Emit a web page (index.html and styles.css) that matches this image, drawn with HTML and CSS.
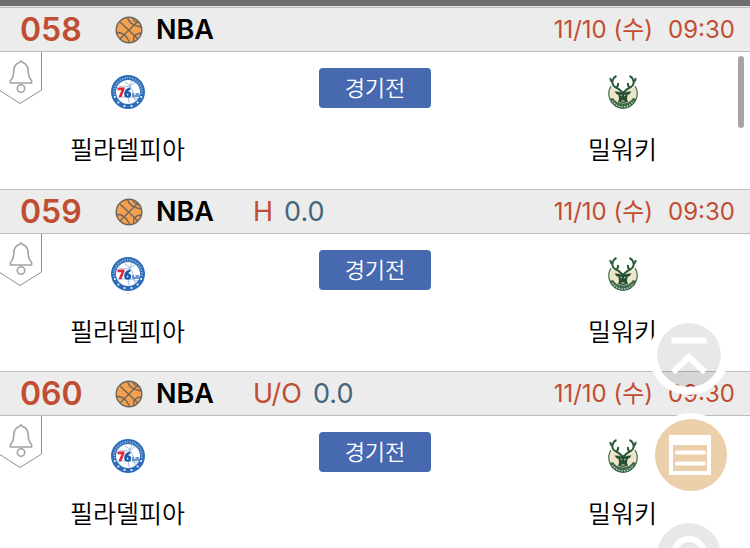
FILE: index.html
```
<!DOCTYPE html>
<html lang="ko">
<head>
  <meta charset="UTF-8">
  <meta name="viewport" content="width=device-width, initial-scale=1.0">
  <title>NBA 경기 목록</title>
  <link rel="stylesheet" href="styles.css">
</head>
<body>
  <!-- Shared icons -->
  <svg class="sprite" aria-hidden="true">
    <symbol id="ball" viewBox="0 0 28 28">
      <circle cx="14" cy="14" r="12.8" fill="#f5a04f" stroke="#6a6560" stroke-width="1.4"/>
      <path d="M5 6 L23 23 M23 5 L5 23 M12.500 1.500 Q14 9 26 11 M18 2.500 Q20 6.500 24.500 7 M2 16.500 Q10 16 14.500 26 M19 26 Q17 18 26 17" fill="none" stroke="#6a6560" stroke-width="1.3"/>
    </symbol>
    <symbol id="bell" viewBox="0 0 42 52">
      <path d="M41.5 0 V38 L20 51.5 L-1 38" fill="#fff" stroke="#8f8f8f" stroke-width="1"/>
      <g fill="none" stroke="#a3a3a3" stroke-width="1.6" stroke-linejoin="round">
        <path d="M19.4 10.6 Q21 7.6 22.6 10.6 Q28 12.5 28.2 19 C28.3 24 29 26 31.6 28.5 V31 H10.4 V28.5 C13 26 13.7 24 13.8 19 Q14 12.5 19.4 10.6 Z"/>
        <circle cx="21" cy="36.5" r="3.7"/>
      </g>
    </symbol>
    <symbol id="sixers" viewBox="0 0 36 36">
      <circle cx="18" cy="18" r="17" fill="#2e6db8"/>
      <path d="M4.500 20.500 A13.800 13.800 0 1 1 31.500 20.500" fill="none" stroke="#c9dcf1" stroke-width="2" stroke-dasharray="1.3 1.3" opacity=".6"/>
      <circle cx="18" cy="18" r="12" fill="#fff"/>
      <path d="M9 12 Q18 15 25 8.500 M15 8 Q23 11 25 27 M22 7 Q17 14 19 29 M8 24 Q17 21 28 25" fill="none" stroke="#9dbde0" stroke-width="1"/>
      <path d="M7.500 13.500 H14.500 V15.500 L11.500 23 H8.500 L11.500 16.300 H7.500 Z" fill="#e2253d"/>
      <path d="M20.500 13.500 Q15 14 14.200 19 Q13.800 23.700 17.500 23.700 Q21.200 23.700 21.200 20.200 Q21 17.200 18 17.400 Q18.600 15.900 20.500 15.700 Z M17.600 19.400 Q18.800 19.400 18.500 20.700 Q18 22 17 21.300 Q16.600 20 17.600 19.400" fill="#1d5cab" fill-rule="evenodd"/>
      <path d="M22 22 H29.500 M22 20 H24 M25.500 20 H29" stroke="#3f77ba" stroke-width="1.5"/>
      <g fill="#fff">
        <circle cx="4.8" cy="23" r="1"/><circle cx="8.4" cy="28.4" r="1"/><circle cx="14.5" cy="32" r="1"/>
        <circle cx="21.5" cy="32" r="1"/><circle cx="27.6" cy="28.4" r="1"/><circle cx="31.2" cy="23" r="1"/>
      </g>
    </symbol>
    <symbol id="bucks" viewBox="0 0 36 36">
      <path d="M6 12.500 A14 14 0 1 0 30 12.500 Q24 17 18 17 Q12 17 6 12.500 Z" fill="#eee6c9"/>
      <path d="M6 12 A14.200 14.200 0 1 0 30 12" fill="none" stroke="#4d7557" stroke-width="1.3"/>
      <path d="M4.600 25 A14 14 0 0 0 31.400 25 L28 24 Q25 29 18 29.500 Q11 29 8 24 Z" fill="#3f6b4b"/>
      <path d="M7.500 27 A12.300 12.300 0 0 0 28.500 27" fill="none" stroke="#d8e0d5" stroke-width="1.3" stroke-dasharray="1.3 1.4"/>
      <path d="M17 18 Q14 14.500 10 13 Q6 10 8 5.500 Q9 3 11.500 2 M7.500 8 Q5 6.500 5.500 4 M11.500 13.500 Q13.500 12 13 9 M19 18 Q22 14.500 26 13 Q30 10 28 5.500 Q27 3 24.500 2 M28.500 8 Q31 6.500 30.500 4 M24.500 13.500 Q22.500 12 23 9" fill="none" stroke="#2c5b3c" stroke-width="2"/>
      <path d="M9.500 17.500 Q13 17 15.500 18.500 L18 17 L20.500 18.500 Q23 17 26.500 17.500 Q25 20.500 22.500 21 L22 25 L23 28 L18 29 L13 28 L14 25 L13.500 21 Q11 20.500 9.500 17.500 Z" fill="#244f34"/>
      <path d="M15.500 21 L17 22 M20.500 21 L19 22 M16.500 27 H19.500" stroke="#eee6c9" stroke-width="1"/>
    </symbol>
  </svg>

  <div class="top-bar"></div>

  <main class="game-list">
    <section class="game">
      <header class="game-header">
        <span class="game-no">058</span>
        <svg class="ball"><use href="#ball"/></svg>
        <span class="league">NBA</span>
        <time class="date">11/10 (수)</time>
        <time class="time">09:30</time>
      </header>
      <div class="game-body">
        <button class="alarm" type="button" aria-label="알림"><svg><use href="#bell"/></svg></button>
        <div class="team"><svg><use href="#sixers"/></svg><span>필라델피아</span></div>
        <div class="status"><button class="status-btn" type="button">경기전</button></div>
        <div class="team"><svg><use href="#bucks"/></svg><span>밀워키</span></div>
      </div>
    </section>

    <section class="game">
      <header class="game-header">
        <span class="game-no">059</span>
        <svg class="ball"><use href="#ball"/></svg>
        <span class="league">NBA</span>
        <span class="type">H</span>
        <span class="point">0.0</span>
        <time class="date">11/10 (수)</time>
        <time class="time">09:30</time>
      </header>
      <div class="game-body">
        <button class="alarm" type="button" aria-label="알림"><svg><use href="#bell"/></svg></button>
        <div class="team"><svg><use href="#sixers"/></svg><span>필라델피아</span></div>
        <div class="status"><button class="status-btn" type="button">경기전</button></div>
        <div class="team"><svg><use href="#bucks"/></svg><span>밀워키</span></div>
      </div>
    </section>

    <section class="game">
      <header class="game-header">
        <span class="game-no">060</span>
        <svg class="ball"><use href="#ball"/></svg>
        <span class="league">NBA</span>
        <span class="type">U/O</span>
        <span class="point">0.0</span>
        <time class="date">11/10 (수)</time>
        <time class="time">09:30</time>
      </header>
      <div class="game-body">
        <button class="alarm" type="button" aria-label="알림"><svg><use href="#bell"/></svg></button>
        <div class="team"><svg><use href="#sixers"/></svg><span>필라델피아</span></div>
        <div class="status"><button class="status-btn" type="button">경기전</button></div>
        <div class="team"><svg><use href="#bucks"/></svg><span>밀워키</span></div>
      </div>
    </section>
  </main>

  <div class="scroll-thumb"></div>

  <!-- Floating buttons -->
  <nav class="quick-menu">
    <button class="quick" type="button" aria-label="맨 위로">
      <svg viewBox="0 0 64 64" fill="none" stroke="#fff">
        <path d="M14.500 17.500 H49.500" stroke-width="6"/>
        <path d="M16 49 L32 34 L48 49" stroke-width="6"/>
      </svg>
    </button>
    <button class="quick quick-list" type="button" aria-label="목록">
      <svg viewBox="0 0 72 72" fill="none" stroke="#fff">
        <path d="M14 16 H56 V56 H14 Z M18 26 V52 H52 V26 Z" fill="#fff" fill-rule="evenodd" stroke="none"/>
        <path d="M22 33.500 H49 M22 44.500 H49" stroke-width="4" stroke-linecap="round"/>
      </svg>
    </button>
    <button class="quick" type="button" aria-label="고객센터">
      <svg viewBox="0 0 64 64" fill="none" stroke="#fff">
        <circle cx="32" cy="31" r="15" stroke-width="6"/>
      </svg>
    </button>
  </nav>
</body>
</html>
```

FILE: styles.css
```
* {
  box-sizing: border-box;
}
html, body {
  margin: 0;
  height: 100%;
  overflow: hidden;
}
body {
  position: relative;
  background: #fff;
  color: #000;
  font-family: Inter, "Noto Sans CJK KR", sans-serif;
}
button {
  padding: 0;
  border: 0;
  background: none;
  font-family: inherit;
  cursor: pointer;
}
svg {
  display: block;
}
.sprite {
  position: absolute;
  width: 0;
  height: 0;
}
.top-bar {
  height: 7px;
  background: #6e6e6e;
  border-bottom: 1px solid #e4e4e4;
}

/* Game rows */
.game-header {
  display: flex;
  align-items: center;
  height: 45px;
  padding: 0 15px 0 20px;
  background: #ececec;
  border-top: 1px solid #bdbdbd;
  border-bottom: 1px solid #bdbdbd;
  line-height: 43px;
  white-space: nowrap;
}
.game-no {
  width: 95px;
  color: #c14d32;
  font-size: 32px;
  font-weight: 600;
}
.ball {
  width: 28px;
  height: 28px;
}
.league {
  width: 97px;
  margin-left: 13px;
  font-size: 27px;
  font-weight: 600;
}
.type {
  margin-right: 11px;
  color: #c14d32;
  font-size: 27px;
}
.point {
  color: #456579;
  font-size: 27px;
}
.date, .time {
  color: #c14d32;
  font-size: 24px;
}
.date {
  margin-left: auto;
}
.time {
  margin-left: 15px;
}
.game-body {
  position: relative;
  display: grid;
  grid-template-columns: 34% 1fr 34%;
  height: 137px;
  padding-top: 16px;
}
.alarm {
  position: absolute;
  top: 0;
  left: 0;
}
.alarm svg {
  width: 42px;
  height: 52px;
}
.team {
  display: flex;
  flex-direction: column;
  align-items: center;
  gap: 22px;
  padding-top: 6px;
  font-size: 25px;
  font-weight: 350;
  line-height: 36px;
}
.team svg {
  width: 36px;
  height: 36px;
}
.status {
  text-align: center;
}
.status-btn {
  width: 112px;
  height: 40px;
  padding-bottom: 4px;
  border-radius: 4px;
  background: #4769b0;
  color: #fff;
  font-size: 22px;
  font-weight: 350;
}

/* Overlays */
.scroll-thumb {
  position: fixed;
  top: 56px;
  right: 6px;
  width: 6px;
  height: 72px;
  border-radius: 3px;
  background: #a5a5a5;
}
.quick-menu {
  position: fixed;
  right: 17px;
  bottom: -47px;
  display: flex;
  flex-direction: column;
  align-items: flex-start;
  gap: 18px;
}
.quick {
  width: 80px;
  height: 80px;
  border: 8px solid #fff;
  border-radius: 50%;
  background: rgba(0, 0, 0, 0.09);
  background-clip: padding-box;
}
.quick-list {
  width: 84px;
  height: 84px;
  border-width: 6px;
  background: #ecd0ac;
}
```
